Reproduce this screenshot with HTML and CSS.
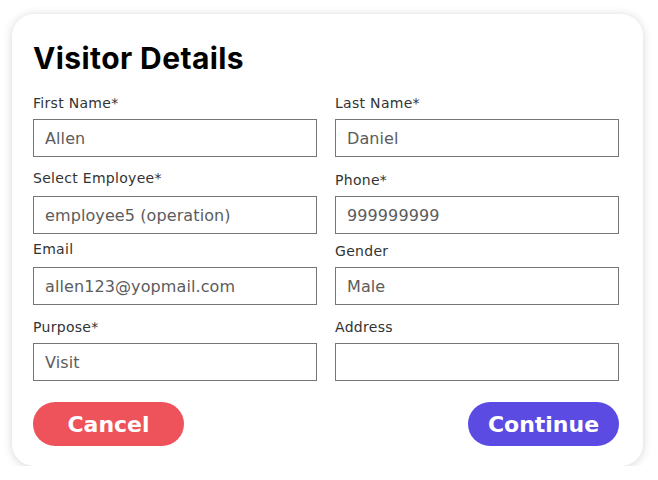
FILE: index.html
```html
<!DOCTYPE html>
<html lang="en">
<head>
<meta charset="utf-8">
<title>Visitor Details</title>
<link rel="stylesheet" href="styles.css">
</head>
<body>
<div class="page">
  <form class="card">
    <h1 class="title">Visitor Details</h1>
    <div class="grid">
      <div class="field">
        <label class="label">First Name*</label>
        <input class="input" type="text" value="Allen">
      </div>
      <div class="field">
        <label class="label">Last Name*</label>
        <input class="input" type="text" value="Daniel">
      </div>
      <div class="field">
        <label class="label label-tight">Select Employee*</label>
        <input class="input" type="text" value="employee5 (operation)">
      </div>
      <div class="field">
        <label class="label">Phone*</label>
        <input class="input" type="text" value="999999999">
      </div>
      <div class="field">
        <label class="label label-tight">Email</label>
        <input class="input" type="text" value="allen123@yopmail.com">
      </div>
      <div class="field">
        <label class="label">Gender</label>
        <input class="input" type="text" value="Male">
      </div>
      <div class="field">
        <label class="label">Purpose*</label>
        <input class="input" type="text" value="Visit">
      </div>
      <div class="field">
        <label class="label">Address</label>
        <input class="input" type="text" value="">
      </div>
    </div>
    <div class="actions">
      <button type="button" class="btn btn-cancel">Cancel</button>
      <button type="button" class="btn btn-continue">Continue</button>
    </div>
  </form>
</div>
</body>
</html>
```
FILE: styles.css
```css
* { box-sizing: border-box; }
html, body { margin: 0; padding: 0; background: #ffffff; }
body { font-family: "DejaVu Sans", Inter, sans-serif; color: #333333; }

.page {
  padding: 14px 0 0 12px;
}

.card {
  width: 631px;
  background: #ffffff;
  border-radius: 22px;
  box-shadow: 0 1px 10px rgba(0, 0, 0, 0.17);
  padding: 26px 24px 20px 21px;
}

.title {
  margin: 0 0 17px 0;
  font-family: Inter, "DejaVu Sans", sans-serif;
  font-size: 30px;
  line-height: 36px;
  font-weight: 700;
  color: #000000;
  letter-spacing: 0.4px;
}

.grid {
  display: grid;
  grid-template-columns: 284px 284px;
  column-gap: 18px;
  grid-template-rows: 64px 77px 71px 76px;
  align-items: end;
}

.field {
  display: flex;
  flex-direction: column;
}

.label {
  font-size: 14px;
  line-height: 20px;
  font-weight: 400;
  color: #333333;
  letter-spacing: 0.3px;
  margin-bottom: 6px;
}

.label-tight { margin-bottom: 8px; }

.input {
  height: 38px;
  border: 1px solid #767676;
  border-radius: 0;
  padding: 0 11px;
  font-family: inherit;
  font-size: 16px;
  letter-spacing: 0.1px;
  color: #5c5c5c;
  background: #ffffff;
  outline: none;
}

.actions {
  display: flex;
  justify-content: space-between;
  margin-top: 21px;
}

.btn {
  width: 151px;
  height: 44px;
  border: none;
  border-radius: 22px;
  font-family: inherit;
  font-size: 22px;
  font-weight: 700;
  color: #ffffff;
  cursor: pointer;
  padding: 0;
}

.btn-cancel { background: #ee525a; }
.btn-continue { background: #5b4be3; }
```
